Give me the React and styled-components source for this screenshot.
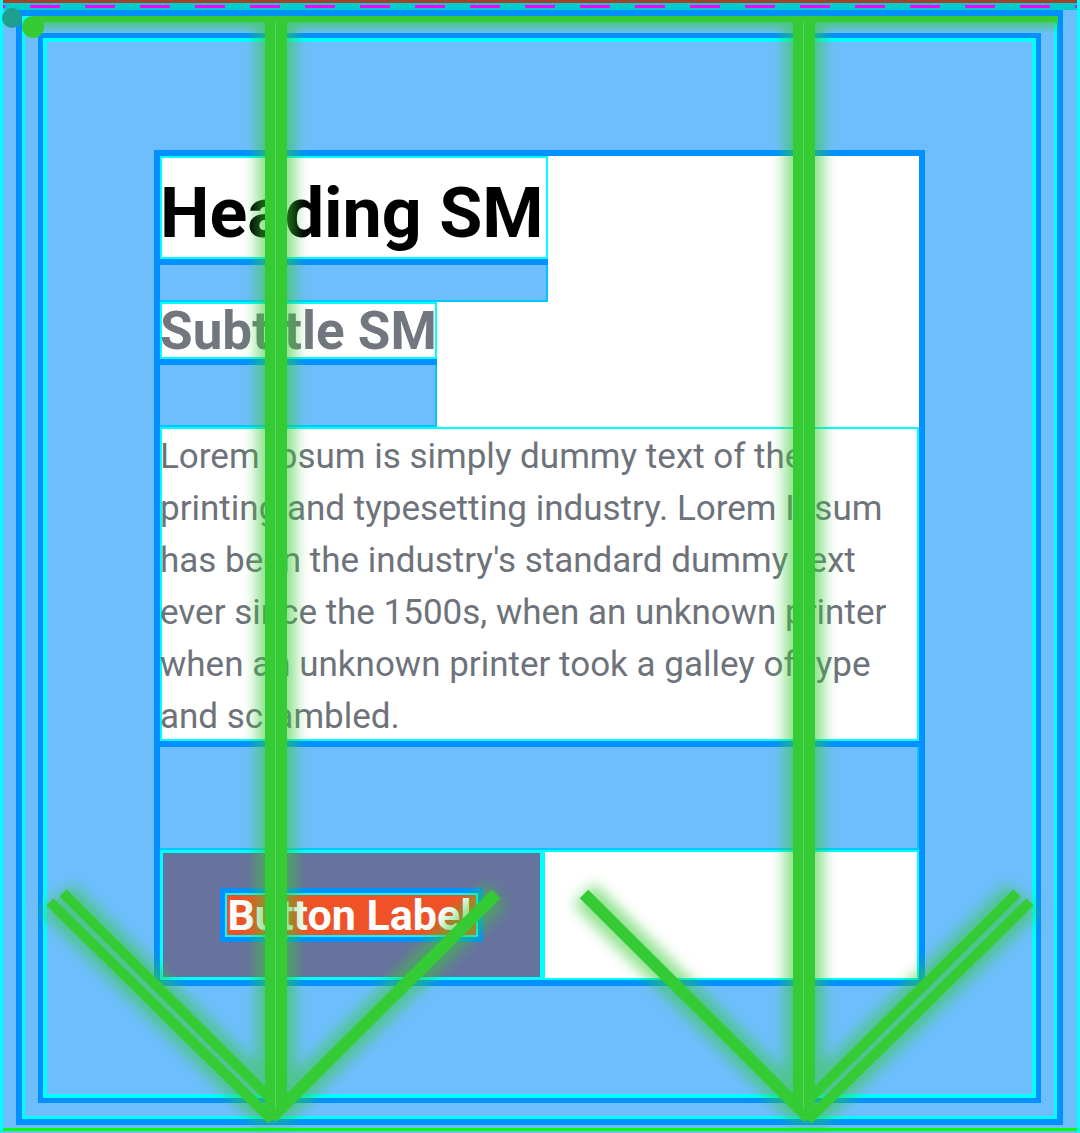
import React from 'react';
import styled, { createGlobalStyle } from 'styled-components';

const GlobalStyle = createGlobalStyle`
  html, body {
    margin: 0;
    padding: 0;
    background: #6ebefd;
  }
  * {
    box-sizing: border-box;
  }
`;

const LIGHT = '#6ebefd';
const BLUE = '#0090ff';
const CYAN = '#00ffff';
const GREEN = '#35cb35';

const Shell = styled.div`
  position: relative;
  width: 1080px;
  height: 1133px;
  overflow: hidden;
  font-family: Roboto, 'Liberation Sans', sans-serif;
`;

const Page = styled.div`
  width: 100%;
  height: 100%;
  background: ${LIGHT};
  border-left: 3px solid ${CYAN};
  border-right: 3px solid ${CYAN};
  display: flex;
  flex-direction: column;
`;

const TopRule = styled.div`
  flex-shrink: 0;
  height: 3px;
  background: #a1432b;
`;

const DashStrip = styled.div`
  flex-shrink: 0;
  height: 7px;
  background-color: #00cccc;
  background-image: linear-gradient(90deg, #ff00ff 0 30px, transparent 30px);
  background-size: 55px 3px;
  background-repeat: repeat-x;
  background-position: 27px 2px;
`;

const OuterFrame = styled.div`
  flex-shrink: 0;
  height: 1115px;
  margin: 0 14px 0 13px;
  border: 6px solid ${BLUE};
  box-shadow: inset 0 0 0 3px ${CYAN};
  padding: 17px 16px 16px;
  display: flex;
`;

const InnerFrame = styled.div`
  flex: 1;
  border: 5px solid ${BLUE};
  box-shadow: inset 0 0 0 4px ${CYAN};
  display: flex;
  align-items: center;
  justify-content: center;
`;

const GreenRule = styled.div`
  flex-shrink: 0;
  height: 3px;
  margin-top: 3px;
  background: #00ff00;
`;

const Card = styled.div`
  width: 771px;
  border: 6px solid ${BLUE};
  background: #fff;
  display: flex;
  flex-direction: column;
`;

const FitColumn = styled.div`
  align-self: flex-start;
  display: flex;
  flex-direction: column;
`;

const Heading = styled.h1`
  margin: 0;
  height: 103px;
  line-height: 115px;
  font-size: 70px;
  font-weight: 700;
  color: #000;
  background: #fff;
  box-shadow: inset 0 0 0 2px ${CYAN};
  white-space: nowrap;
  padding-right: 4px;
`;

const Subtitle = styled.h2`
  margin: 0;
  height: 57px;
  line-height: 59px;
  font-size: 53px;
  font-weight: 700;
  color: #72777f;
  background: #fff;
  box-shadow: inset 0 0 0 2px ${CYAN};
  white-space: nowrap;
`;

const Band = styled.div`
  height: ${(p) => p.$h}px;
  background: ${LIGHT};
  border-top: 6px solid ${BLUE};
  box-shadow: inset -2px -2px 0 #00c8ff;
`;

const Body = styled.p`
  margin: 0;
  height: 314px;
  padding-top: 4px;
  font-size: 35px;
  line-height: 52px;
  color: #6e737b;
  background: #fff;
  box-shadow: inset 0 0 0 2px ${CYAN};
`;

const ButtonRow = styled.div`
  display: flex;
  height: 130px;
`;

const ButtonCell = styled.div`
  width: 383px;
  background: #68729f;
  box-shadow: inset 0 0 0 3px ${CYAN};
  display: flex;
  align-items: center;
  justify-content: center;
`;

const EmptyCell = styled.div`
  flex: 1;
  background: #fff;
  box-shadow: inset 0 0 0 2px ${CYAN};
`;

const LabelFrame = styled.div`
  border: 5px solid ${BLUE};
  background: ${CYAN};
  padding: 2px;
`;

const LabelText = styled.span`
  display: block;
  background: #f05227;
  color: #fff;
  font-size: 43px;
  font-weight: 700;
  line-height: 40px;
  padding: 0 4px 0 0;
  white-space: nowrap;
`;

const Overlay = styled.svg`
  position: absolute;
  top: 0;
  left: 0;
  pointer-events: none;
`;

// arrow strokes: [x1, y1, x2, y2, width]
const strokes = [
  [276, 22, 276, 1112, 22],
  [804, 22, 804, 1112, 22],
  [50, 902, 272, 1120, 10],
  [63, 893, 282, 1110, 10],
  [496, 894, 271, 1118, 12],
  [584, 894, 809, 1118, 12],
  [1030, 902, 808, 1120, 10],
  [1017, 893, 798, 1110, 10],
];

function Arrows() {
  return (
    <Overlay width="1080" height="1133" viewBox="0 0 1080 1133">
      <defs>
        <filter id="glow" x="-20%" y="-20%" width="140%" height="140%">
          <feGaussianBlur stdDeviation="7" />
        </filter>
        <linearGradient id="topFade" x1="0" y1="0" x2="0" y2="1">
          <stop offset="0" stopColor={GREEN} stopOpacity="0.6" />
          <stop offset="1" stopColor={GREEN} stopOpacity="0" />
        </linearGradient>
      </defs>
      <g filter="url(#glow)" opacity="0.55">
        {strokes.map(([x1, y1, x2, y2, w], i) => (
          <line key={i} x1={x1} y1={y1} x2={x2} y2={y2} stroke={GREEN} strokeWidth={w + 18} />
        ))}
      </g>
      <rect x="33" y="22" width="1025" height="12" fill="url(#topFade)" />
      <rect x="33" y="16" width="1025" height="6" fill={GREEN} />
      <circle cx="12" cy="18" r="10" fill="#1f9f8f" />
      <circle cx="33" cy="27" r="11" fill={GREEN} />
      {strokes.map(([x1, y1, x2, y2, w], i) => (
        <line key={i} x1={x1} y1={y1} x2={x2} y2={y2} stroke={GREEN} strokeWidth={w} />
      ))}
      <line x1="275.5" y1="22" x2="275.5" y2="1108" stroke="#5fd35f" strokeWidth="1" />
      <line x1="803.5" y1="22" x2="803.5" y2="1108" stroke="#5fd35f" strokeWidth="1" />
    </Overlay>
  );
}

export default function App() {
  return (
    <Shell>
      <GlobalStyle />
      <Page>
        <TopRule />
        <DashStrip />
        <OuterFrame>
          <InnerFrame>
            <Card>
              <FitColumn>
                <Heading>Heading SM</Heading>
                <Band $h={43} />
              </FitColumn>
              <FitColumn>
                <Subtitle>Subtitle SM</Subtitle>
                <Band $h={68} />
              </FitColumn>
              <Body>
                Lorem Ipsum is simply dummy text of the printing and typesetting industry. Lorem
                Ipsum has been the industry's standard dummy text ever since the 1500s, when an
                unknown printer when an unknown printer took a galley of type and scrambled.
              </Body>
              <Band $h={109} />
              <ButtonRow>
                <ButtonCell>
                  <LabelFrame>
                    <LabelText>Button Label</LabelText>
                  </LabelFrame>
                </ButtonCell>
                <EmptyCell />
              </ButtonRow>
            </Card>
          </InnerFrame>
        </OuterFrame>
        <GreenRule />
      </Page>
      <Arrows />
    </Shell>
  );
}
